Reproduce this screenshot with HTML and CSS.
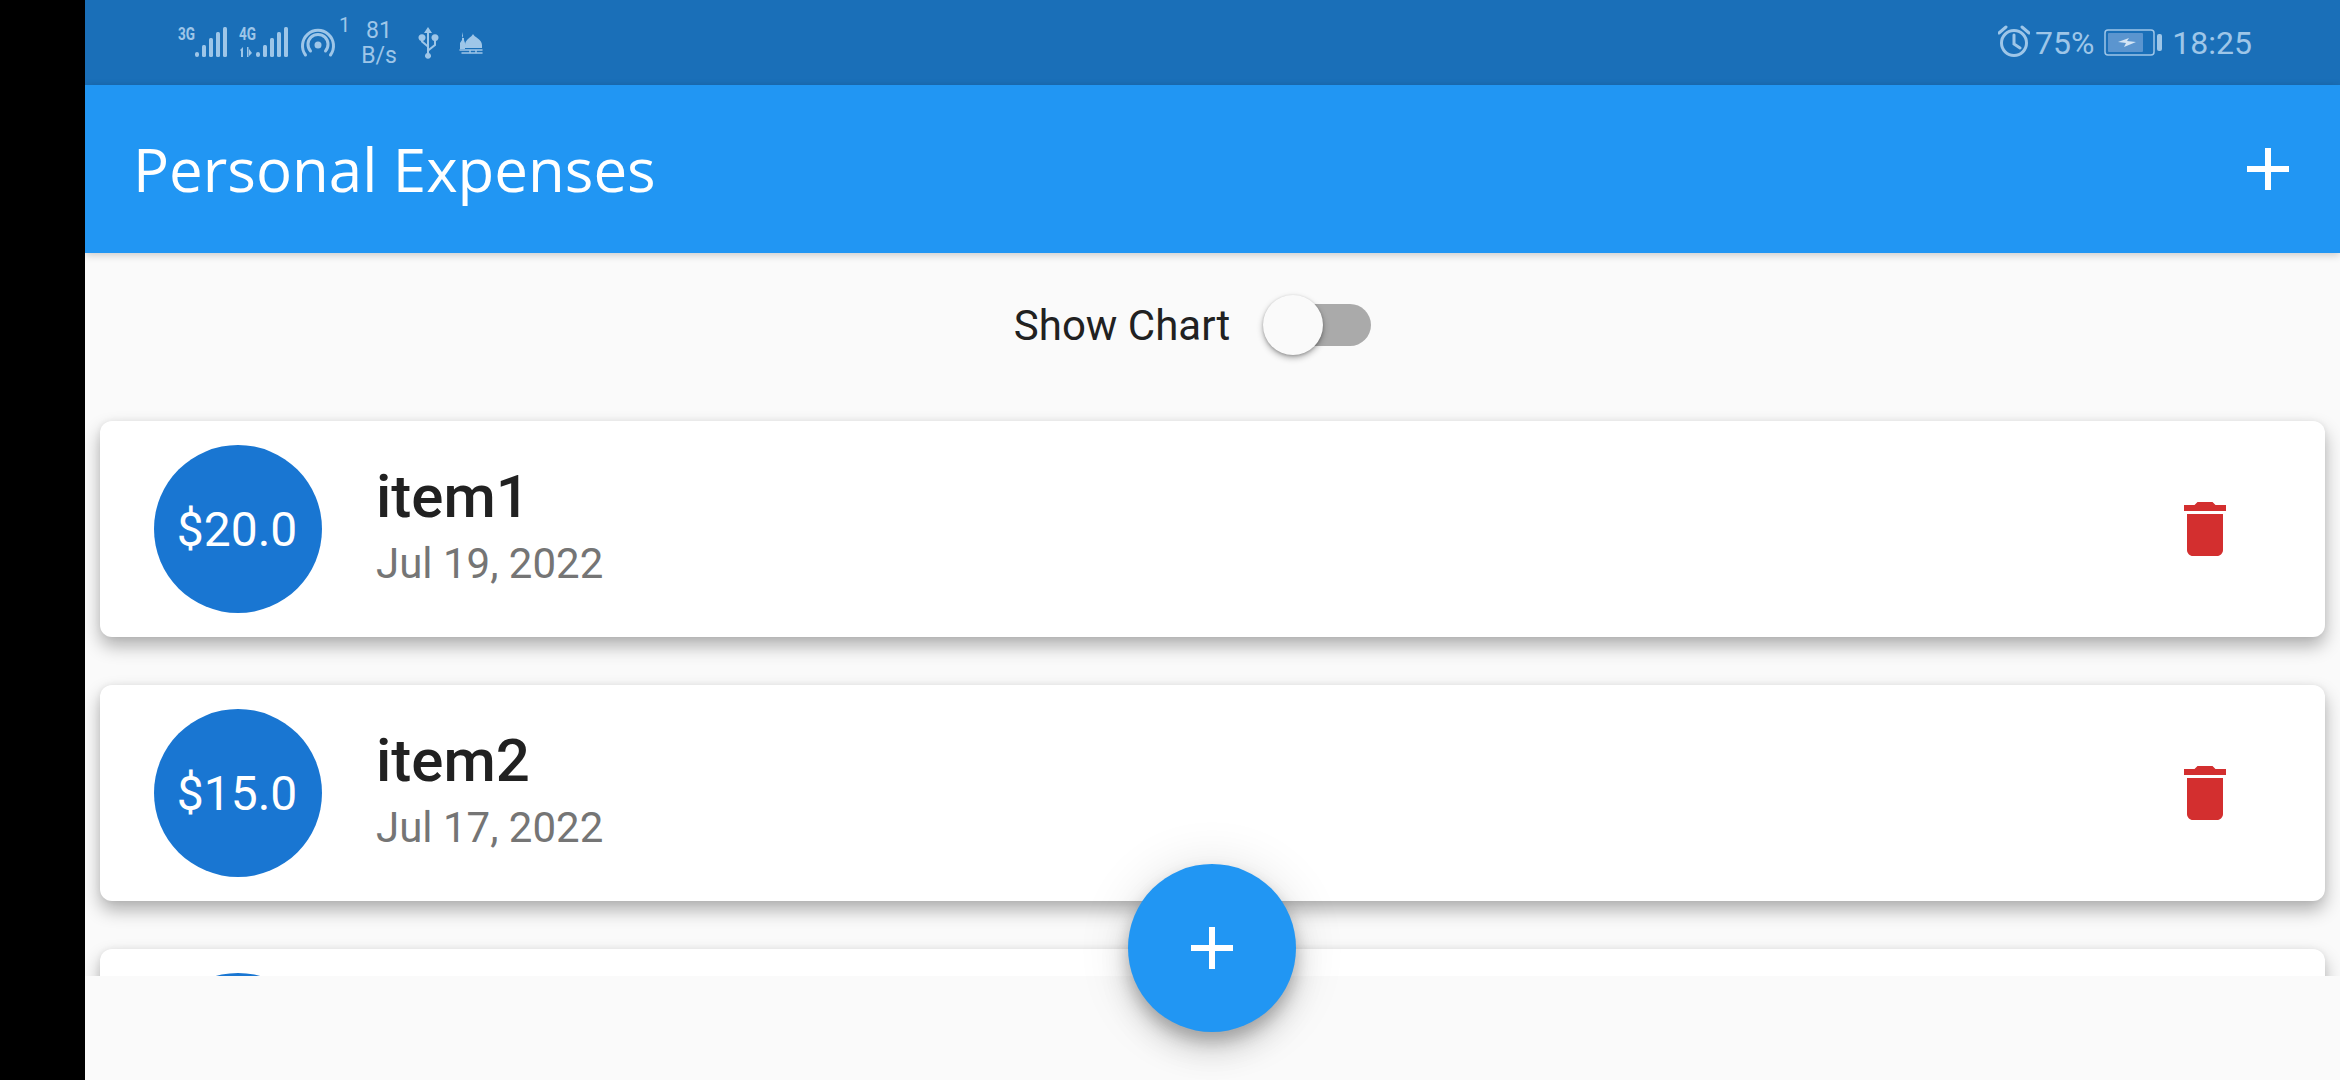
FILE: index.html
```html
<!DOCTYPE html>
<html lang="en">
<head>
<meta charset="utf-8">
<title>Personal Expenses</title>
<link rel="stylesheet" href="styles.css">
</head>
<body>
<div class="screen">
  <div class="cutout"></div>
  <div class="app">
    <div class="status">
      <div class="status-left">
        <svg class="sb-icon" width="50" height="85" viewBox="178 0 50 85">
          <text class="net" x="178" y="40" textLength="17" lengthAdjust="spacingAndGlyphs">3G</text>
          <rect x="195" y="52" width="4" height="5" rx="2"/><rect x="202" y="45" width="4" height="12" rx="1.5"/><rect x="209" y="38" width="4" height="19" rx="1.5"/><rect x="216" y="32" width="4" height="25" rx="1.5"/><rect x="223" y="27" width="4" height="30" rx="1.5"/>
        </svg>
        <svg class="sb-icon gap-10" width="51" height="85" viewBox="238 0 51 85">
          <text class="net" x="239" y="40" textLength="17" lengthAdjust="spacingAndGlyphs">4G</text>
          <path d="M240 50l3-3v10h-2v-6zM247 47h1.500v10H247zM249 49l3 4-3 3z"/>
          <rect x="256" y="52" width="4" height="5" rx="2"/><rect x="263" y="45" width="4" height="12" rx="1.5"/><rect x="270" y="38" width="4" height="19" rx="1.5"/><rect x="277" y="32" width="4" height="25" rx="1.5"/><rect x="284" y="27" width="4" height="30" rx="1.5"/>
        </svg>
        <svg class="sb-icon gap-11" width="36" height="85" viewBox="300 0 36 85">
          <circle cx="318" cy="45" r="3.500"/>
          <path class="line" d="M310.500 51a10 10 0 1 1 15 0M305.500 55a15.500 15.500 0 1 1 25 0"/>
        </svg>
        <span class="sb-one">1</span>
        <div class="speed"><span>81</span><span>B/s</span></div>
        <svg class="sb-icon gap-usb" width="22" height="85" viewBox="419 0 22 85">
          <path d="M430 27l4 6h-3v15.500l5-4v-3.500a3.500 3.500 0 1 1 2 0v4.500l-7 5.500v2a3 3 0 1 1-2 0v-6l-6-5v-1a3.500 3.500 0 1 1 2 0v.100l4 3.400v-11.500h-3z"/>
        </svg>
        <svg class="sb-icon gap-19" width="24" height="85" viewBox="459 0 24 85">
          <path d="M473 34c1 3 9 5 9 11v3h-17v-3c0-6 7-8 8-11z"/>
          <path d="M462 32l1 4-1 2h2v2l1 3v6h-5v-6l2-3z"/>
          <path class="line thin" d="M460 50h22M462 53h20M470 50v3M476 50v3"/>
        </svg>
      </div>
      <div class="status-right">
        <svg class="sb-icon" width="32" height="85" viewBox="2000 0 32 85">
          <circle class="line" cx="2016" cy="43" r="12.500"/>
          <path class="line" d="M2016 35v9l6 4M2001 33l7-6M2031 33l-7-6"/>
        </svg>
        <span class="sb-text pct">75%</span>
        <svg class="sb-icon gap-10" width="59" height="85" viewBox="2104 0 59 85">
          <rect class="line thin" x="2105" y="30" width="49" height="25" rx="3"/>
          <rect class="fill" x="2108" y="33" width="35" height="19" rx="1"/>
          <rect x="2157" y="34" width="5" height="17" rx="2"/>
          <path class="bolt" d="M2118 42l11-4-2 3 9 1-12 5 2-4z"/>
        </svg>
        <span class="sb-text clock">18:25</span>
      </div>
    </div>
    <header class="appbar">
      <h1 class="title">Personal Expenses</h1>
      <svg class="add" width="72" height="72" viewBox="0 0 24 24"><path d="M19 13h-6v6h-2v-6H5v-2h6V5h2v6h6v2z"/></svg>
    </header>
    <main class="content">
      <div class="toggle-row">
        <span class="toggle-label">Show Chart</span>
        <div class="track"><div class="thumb"></div></div>
      </div>
      <div class="list">
        <article class="card">
          <div class="avatar">$20.0</div>
          <div class="info"><div class="name">item1</div><div class="date">Jul 19, 2022</div></div>
          <svg class="trash" width="72" height="72" viewBox="0 0 24 24"><path d="M6 19c0 1.100.9 2 2 2h8c1.100 0 2-.9 2-2V7H6v12zM19 4h-3.500l-1-1h-5l-1 1H5v2h14V4z"/></svg>
        </article>
        <article class="card">
          <div class="avatar">$15.0</div>
          <div class="info"><div class="name">item2</div><div class="date">Jul 17, 2022</div></div>
          <svg class="trash" width="72" height="72" viewBox="0 0 24 24"><path d="M6 19c0 1.100.9 2 2 2h8c1.100 0 2-.9 2-2V7H6v12zM19 4h-3.500l-1-1h-5l-1 1H5v2h14V4z"/></svg>
        </article>
        <article class="card">
          <div class="avatar"></div>
        </article>
      </div>
    </main>
  </div>
  <button class="fab" type="button" aria-label="Add">
    <svg width="72" height="72" viewBox="0 0 24 24"><path d="M19 13h-6v6h-2v-6H5v-2h6V5h2v6h6v2z"/></svg>
  </button>
</div>
</body>
</html>
```
FILE: styles.css
```css
* { box-sizing: border-box; }
html, body { margin: 0; height: 100%; overflow: hidden; background: #000; }
body { font-family: Roboto, sans-serif; }
.screen { display: flex; width: 2340px; height: 1080px; position: relative; }
.cutout { width: 85px; background: #000; flex: none; }
.app { flex: 1; display: flex; flex-direction: column; background: #fafafa; min-width: 0; }

.status { height: 85px; flex: none; display: flex; justify-content: space-between; background: #1a6fb8; color: #9ec6e8; padding: 0 88px 0 93px; }
.status-left, .status-right { display: flex; align-items: flex-start; }
.sb-icon { display: block; fill: #9ec6e8; flex: none; }
.net { font-family: "Liberation Sans Narrow", Roboto, sans-serif; font-size: 19px; font-weight: 700; }
.line { fill: none; stroke: #9ec6e8; stroke-width: 3; stroke-linecap: round; }
.thin { stroke-width: 1.500; }
.fill { fill: #5b95cf; }
.bolt { fill: #d4e5f5; }
.gap-10 { margin-left: 10px; }
.gap-11 { margin-left: 11px; }
.gap-usb { margin-left: 19px; }
.gap-19 { margin-left: 20px; }
.sb-one { font-size: 20px; line-height: 24px; margin: 13px 0 0 3px; width: 10px; }
.speed { display: flex; flex-direction: column; align-items: center; font-size: 23px; line-height: 25px; margin: 18px 0 0 11px; width: 38px; }
.sb-text { font-size: 32px; line-height: 87px; }
.pct { margin-left: 5px; }
.clock { margin-left: 9px; }

.appbar { height: 168px; flex: none; display: flex; align-items: center; justify-content: space-between; background: #2196f3; padding: 0 36px 0 48px; box-shadow: 0 2px 8px rgba(0,0,0,.2); position: relative; z-index: 1; }
.title { margin: 0; font-family: "Open Sans", sans-serif; font-weight: 400; font-size: 60px; color: #fff; }
.add { fill: #fff; display: block; }

.content { flex: 1; display: flex; flex-direction: column; min-height: 0; padding-bottom: 104px; }
.toggle-row { height: 144px; flex: none; display: flex; align-items: center; justify-content: center; gap: 42px; padding-right: 40px; }
.toggle-label { font-size: 42px; color: #212121; }
.track { width: 99px; height: 42px; border-radius: 21px; background: #aaa; position: relative; }
.thumb { position: absolute; left: -9px; top: -9px; width: 60px; height: 60px; border-radius: 50%; background: #fafafa; box-shadow: 0 3px 6px rgba(0,0,0,.3), 0 1px 3px rgba(0,0,0,.2); }

.list { flex: 1; overflow: hidden; min-height: 0; display: flex; flex-direction: column; padding: 24px 15px 0; gap: 48px; }
.card { height: 216px; flex: none; display: flex; align-items: center; background: #fff; border-radius: 12px; padding: 0 84px 0 54px; box-shadow: 0 9px 18px rgba(0,0,0,.3), 0 0 6px rgba(0,0,0,.06); }
.avatar { width: 168px; height: 168px; flex: none; border-radius: 50%; background: #1976d2; color: #fff; font-size: 48px; display: flex; align-items: center; justify-content: center; padding-right: 2px; }
.info { flex: 1; margin-left: 54px; padding-bottom: 5px; }
.name { font-size: 60px; font-weight: 500; color: #212121; line-height: 66px; }
.date { font-size: 42px; color: #757575; line-height: 50px; margin-top: 9px; }
.trash { fill: #d32f2f; display: block; flex: none; }

.fab { position: absolute; left: 1128px; top: 864px; width: 168px; height: 168px; border: 0; padding: 0; border-radius: 50%; background: #2196f3; display: flex; align-items: center; justify-content: center; box-shadow: 0 18px 30px rgba(0,0,0,.14), 0 3px 54px rgba(0,0,0,.12), 0 9px 15px rgba(0,0,0,.2); }
.fab svg { fill: #fff; display: block; }
```
